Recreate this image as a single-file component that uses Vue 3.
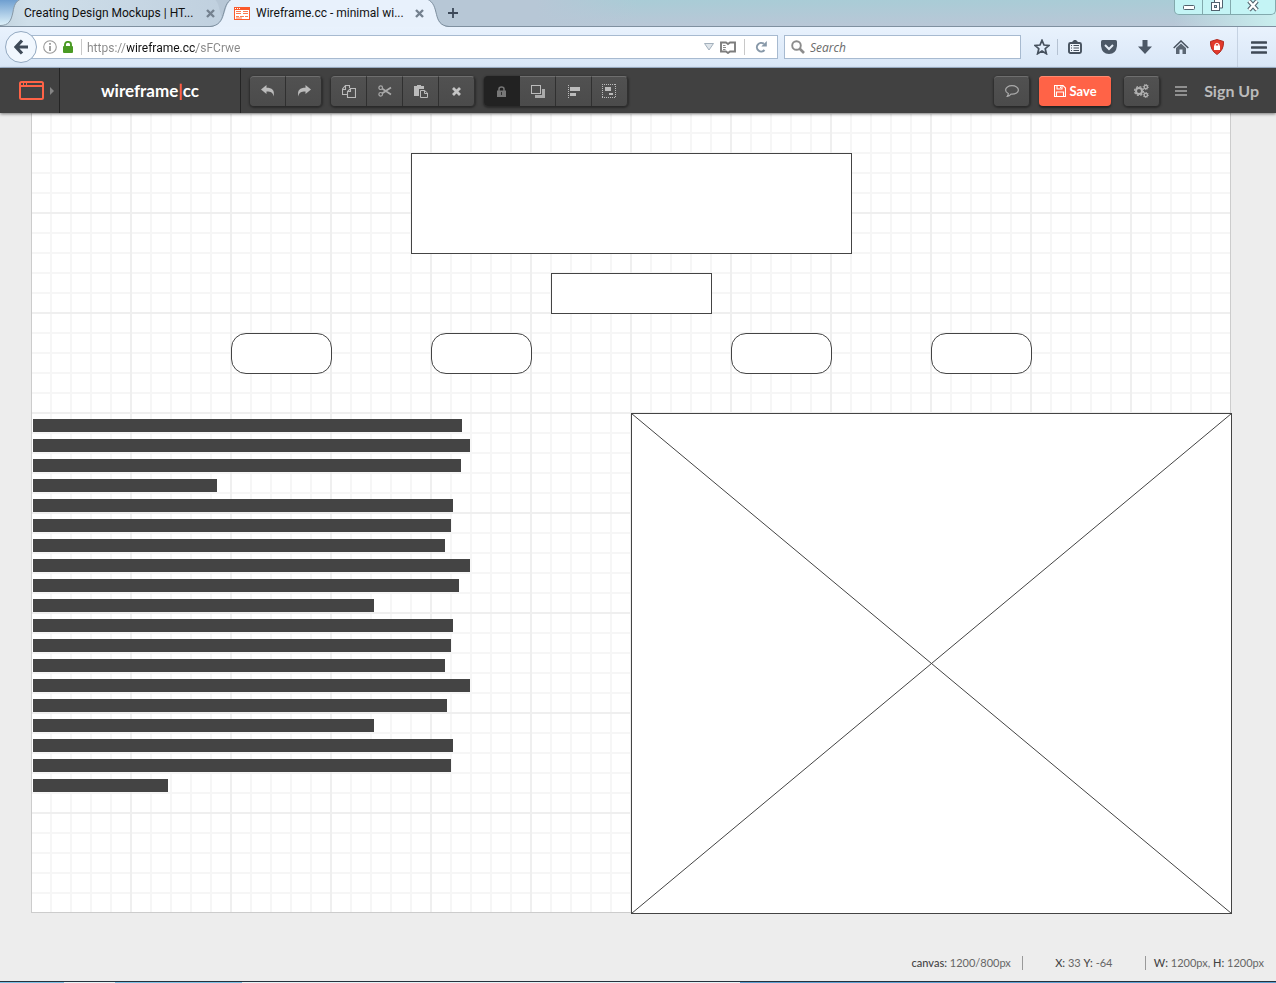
<script setup>
import { ref } from 'vue'

const url = ref('https://wireframe.cc/sFCrwe')
const query = ref('')

const lineWidths = [429, 437, 428, 184, 420, 418, 412, 437, 426, 341, 420, 418, 412, 437, 414, 341, 420, 418, 135]

const boxes = ['hero', 'subtitle', 'pill one', 'pill two', 'pill three', 'pill four']
</script>

<template>
  <div class="window">
    <header class="tabstrip">
      <svg class="tabshape" width="480" height="27" viewBox="0 0 480 27" aria-hidden="true">
        <defs>
          <linearGradient id="idle" x1="0" y1="0" x2="1" y2="0">
            <stop offset="0" stop-color="#c3d4df" />
            <stop offset="0.12" stop-color="#cfdfea" />
            <stop offset="1" stop-color="#bfcfde" />
          </linearGradient>
          <linearGradient id="corner" x1="0" y1="0" x2="0" y2="1">
            <stop offset="0" stop-color="#6f9fd0" />
            <stop offset="1" stop-color="#e2f4fb" />
          </linearGradient>
        </defs>
        <path d="M0 0H18L8 26H0Z" fill="url(#corner)" />
        <path d="M0 26C9 26 11 21 13 12C14 5 16 1 21 -1H214C222 3 218 26 232 26Z" fill="url(#idle)" />
        <path d="M0 25.500C9 25.500 11 21 13 12C14 5 16 1 21 -1" fill="none" stroke="#8798a6" />
        <path d="M0 26.500H480" stroke="#7f90a0" />
        <path d="M210 27C228 26 222 5 232 -1H427C441 5 431 26 449 27Z" fill="#e8f1fc" />
        <path d="M210 26.500C228 25 220 5 232 -1M427 -1C441 5 431 25 449 26.500" fill="none" stroke="#7f90a0" />
      </svg>
      <div class="tab first">
        <span>Creating Design Mockups | HT...</span>
        <button class="close" aria-label="Close tab">
          <svg width="9" height="9" viewBox="0 0 9 9"><path d="M1 1L8 8M8 1L1 8" stroke="#74818f" stroke-width="2.400" /></svg>
        </button>
      </div>
      <div class="tab active">
        <svg width="16" height="13" viewBox="0 0 16 13" aria-hidden="true">
          <path d="M0 0H16V13H0Z" fill="#fb5a2c" />
          <path d="M1 3H15V12H1Z" fill="#fff" />
          <path d="M2 4.500H7M2 6.500H7M2 9.500H5M6 9.500H10M11 9.500H14M9 4.500H14M9 6.500H14M2 11H8" stroke="#fb7a50" />
          <path d="M1 1.500H2M3 1.500H4M5 1.500H6" stroke="#fff" />
        </svg>
        <span>Wireframe.cc - minimal wi...</span>
        <button class="close" aria-label="Close tab">
          <svg width="9" height="9" viewBox="0 0 9 9"><path d="M1 1L8 8M8 1L1 8" stroke="#74818f" stroke-width="2.400" /></svg>
        </button>
      </div>
      <button class="newtab" aria-label="New tab">
        <svg width="10" height="10" viewBox="0 0 10 10"><path d="M5 0V10M0 5H10" stroke="#3c4858" stroke-width="1.800" /></svg>
      </button>
      <div class="winctl">
        <button aria-label="Minimize">
          <svg width="12" height="14" viewBox="0 0 12 14"><rect x=".5" y="5.500" width="11" height="4" rx="1" fill="#fff" stroke="#51626e" /></svg>
        </button>
        <button aria-label="Restore">
          <svg width="12" height="14" viewBox="0 0 12 14"><path d="M3.500 3V-1H11.500V8H9" fill="#fff" stroke="#51626e" /><rect x=".5" y="2.500" width="8" height="8" fill="#fff" stroke="#51626e" /><rect x="3.500" y="5.500" width="2" height="2" fill="#bfe8ef" stroke="#51626e" /></svg>
        </button>
        <button aria-label="Close">
          <svg width="12" height="14" viewBox="0 0 12 14"><path d="M2 1L10 10M10 1L2 10" stroke="#51626e" stroke-width="4.500" /><path d="M2 1L10 10M10 1L2 10" stroke="#fff" stroke-width="2.400" /></svg>
        </button>
      </div>
    </header>

    <nav class="navbar">
      <button class="back" aria-label="Back">
        <svg width="14" height="16" viewBox="0 0 14 16"><path d="M8 1.500L2 8L8 14.500M2.500 8H14" fill="none" stroke="#3f4a58" stroke-width="3.200" /></svg>
      </button>
      <div class="address">
        <svg width="14" height="14" viewBox="0 0 14 14" aria-hidden="true"><circle cx="7" cy="7" r="6.300" fill="none" stroke="#9a9a9a" stroke-width="1.100" /><path d="M7 3V4.800M7 6V11" stroke="#8a8a8a" stroke-width="1.600" /></svg>
        <svg class="lock" width="10" height="12" viewBox="0 0 10 12" aria-hidden="true"><path d="M2 6V3.500C2 0 8 0 8 3.500V6" fill="none" stroke="#4a9a24" stroke-width="1.900" /><rect y="5" width="10" height="7" rx="1" fill="#4a9a24" /></svg>
        <i class="rule"></i>
        <input v-model="url" class="url" type="text" aria-label="Address" />
        <svg width="10" height="8" viewBox="0 0 10 8" aria-hidden="true"><path d="M.5 .5H9.500L5 7Z" fill="#dfe5ea" stroke="#a3b0bc" /></svg>
        <button class="plain" aria-label="Reader view">
          <svg width="16" height="13" viewBox="0 0 16 13"><path d="M1 1.500H6L8 3L10 1.500H15V10.500H10L8 12L6 10.500H1Z" fill="#fff" stroke="#7d7d7d" stroke-width="1.900" /><path d="M3 4.500H5.500M3 6.500H6M3 8.500H5.500" stroke="#8a8a8a" /></svg>
        </button>
        <i class="rule short"></i>
        <button class="plain" aria-label="Reload">
          <svg width="12" height="12" viewBox="0 0 12 12"><path d="M9.500 9A4.300 4.300 0 1 1 8.800 2.800" fill="none" stroke="#8798a8" stroke-width="2" /><path d="M11.800 0V5.500H6.300Z" fill="#8798a8" /></svg>
        </button>
      </div>
      <label class="search">
        <svg width="14" height="14" viewBox="0 0 14 14" aria-hidden="true"><circle cx="5.500" cy="5.500" r="4.300" fill="none" stroke="#8c8c8c" stroke-width="1.900" /><path d="M8.500 8.500L13 13" stroke="#8c8c8c" stroke-width="2.600" /></svg>
        <input v-model="query" type="text" placeholder="Search" aria-label="Search" />
      </label>
      <div class="navicons">
        <button class="star" aria-label="Bookmark">
          <svg width="16" height="16" viewBox="0 0 16 16"><path d="M8 1.300L10 6L15 6.400L11.200 9.700L12.400 14.700L8 12L3.600 14.700L4.800 9.700L1 6.400L6 6Z" fill="none" stroke="#46515e" stroke-width="1.700" /></svg>
        </button>
        <i class="divider"></i>
        <button class="list" aria-label="Bookmarks list">
          <svg width="14" height="14" viewBox="0 0 14 14"><rect x="1" y="3" width="12" height="10" rx="1.500" fill="#eef4fb" stroke="#46515e" stroke-width="1.900" /><path d="M3 3L7 -1L11 3Z" fill="#46515e" /><path d="M3 5.500H4M5.500 5.500H11M3 8H4M5.500 8H11M3 10.500H4M5.500 10.500H11" stroke="#46515e" stroke-width="1.200" /></svg>
        </button>
        <button aria-label="Pocket">
          <svg width="16" height="14" viewBox="0 0 16 14"><path d="M1.500 0H14.500Q16 0 16 1.500V6Q15 14 8 14Q1 14 0 6V1.500Q0 0 1.500 0Z" fill="#4c5866" /><path d="M4 5L8 9L12 5" fill="none" stroke="#e5edf6" stroke-width="2" /></svg>
        </button>
        <button aria-label="Downloads">
          <svg width="14" height="14" viewBox="0 0 14 14"><path d="M4.500 0H9.500V6.500H14L7 14L0 6.500H4.500Z" fill="#4c5866" /></svg>
        </button>
        <button aria-label="Home">
          <svg width="16" height="14" viewBox="0 0 16 14"><path d="M.7 8L8 1L15.300 8" fill="none" stroke="#46515e" stroke-width="1.500" /><path d="M3 8L8 3.500L13 8V14H9.500V9.500H6.500V14H3Z" fill="#5b6673" /></svg>
        </button>
        <button aria-label="Shield">
          <svg width="14" height="16" viewBox="0 0 14 16"><path d="M7 .5L13.500 2.500Q14 11 7 15.500Q0 11 .5 2.500Z" fill="#e23a2c" stroke="#b02a20" /><rect x="4" y="6.500" width="6" height="4.500" fill="#fff" /><path d="M5.200 7V5.500Q7 3 8.800 5.500V7" fill="none" stroke="#fff" stroke-width="1.200" /></svg>
        </button>
        <button class="menu" aria-label="Menu">
          <svg width="16" height="13" viewBox="0 0 16 13"><path d="M1 1.500H15M1 6.500H15M1 11.500H15" stroke="#3f4955" stroke-width="2.600" stroke-linecap="round" /></svg>
        </button>
      </div>
    </nav>

    <div class="toolbar">
      <button class="device" aria-label="Choose canvas">
        <svg width="25" height="19" viewBox="0 0 25 19"><rect x="1" y="1" width="23" height="17" rx="1.500" fill="none" stroke="#ff6347" stroke-width="2" /><path d="M1 5H24" stroke="#ff6347" stroke-width="2" /><path d="M4.500 1V5M7.500 1V5" stroke="#ff6347" /></svg>
        <svg width="4" height="8" viewBox="0 0 4 8"><path d="M0 0L4 4L0 8Z" fill="#858585" /></svg>
      </button>
      <h1 class="brand">wireframe<b>|</b>cc</h1>
      <div class="group">
        <button aria-label="Undo"><svg width="14" height="12" viewBox="0 0 14 12"><path d="M0 4.500L5.500 0V2.800C11 2.800 14 5 12.600 11.500C12 7.500 10 6.500 5.500 6.500V9Z" fill="#bbb" /></svg></button>
        <button aria-label="Redo"><svg width="14" height="12" viewBox="0 0 14 12"><path d="M14 4.500L8.500 0V2.800C3 2.800 0 5 1.400 11.500C2 7.500 4 6.500 8.500 6.500V9Z" fill="#bbb" /></svg></button>
      </div>
      <div class="group">
        <button aria-label="Copy"><svg width="14" height="13" viewBox="0 0 14 13"><path d="M5.500 9.500H.5V4L3.500 .5H7.500V3M.5 4.500H3.500V.5M5.500 12.500V6.500L8.500 3.500H13.500V12.500ZM5.500 6.500H8.500V3.500" fill="none" stroke="#bbb" stroke-width="1.100" /></svg></button>
        <button aria-label="Cut"><svg width="14" height="12" viewBox="0 0 14 12"><circle cx="2.700" cy="2.700" r="1.800" fill="none" stroke="#aaa" stroke-width="1.200" /><circle cx="2.700" cy="9.300" r="1.800" fill="none" stroke="#aaa" stroke-width="1.200" /><path d="M4 3.500L13 9.500M4 8.500L13 2.500" stroke="#aaa" stroke-width="1.700" /></svg></button>
        <button aria-label="Paste"><svg width="14" height="13" viewBox="0 0 14 13"><path d="M0 1H3V0H7V1H10V4H5V11H0Z" fill="#bbb" /><path d="M6.500 5.500H10.500L13.500 8V12.500H6.500ZM10.500 5.500V8.500H13.500" fill="#4d4d4d" stroke="#bbb" /></svg></button>
        <button aria-label="Delete"><svg width="9" height="9" viewBox="0 0 9 9"><path d="M1 1L8 8M8 1L1 8" stroke="#c4c4c4" stroke-width="2.800" /></svg></button>
      </div>
      <div class="group">
        <button class="pressed" aria-label="Lock"><svg width="9" height="11" viewBox="0 0 9 11"><path d="M2 5V3C2 .2 7 .2 7 3V5" fill="none" stroke="#777" stroke-width="1.500" /><rect y="4.500" width="9" height="6.500" fill="#777" /><path d="M4.500 6V9" stroke="#333" /></svg></button>
        <button aria-label="Arrange"><svg width="14" height="13" viewBox="0 0 14 13"><rect x=".5" y=".5" width="9" height="8" fill="none" stroke="#bbb" /><path d="M11 4H14V13H4V10H11Z" fill="#aaa" /></svg></button>
        <button aria-label="Align"><svg width="12" height="13" viewBox="0 0 12 13" shape-rendering="crispEdges"><path d="M.5 0V13" stroke="#bbb" stroke-dasharray="1 1" /><path d="M2 2H12V6H2ZM2 8H8V11H2Z" fill="#bbb" /></svg></button>
        <button aria-label="Group"><svg width="15" height="14" viewBox="0 0 15 14" shape-rendering="crispEdges"><path d="M0 .5H14M0 13.500H14M.5 0V14M13.500 0V14" stroke="#bbb" stroke-dasharray="1 1" /><path d="M3 3H9V7H3ZM7 9H11V11H7Z" fill="#bbb" /></svg></button>
      </div>
      <div class="right">
        <div class="group"><button aria-label="Comment"><svg width="14" height="12" viewBox="0 0 14 12"><path d="M3.300 8.500C1.500 7.700 .6 6.500 .6 5C.6 2.600 3.400 .7 7 .7S13.400 2.600 13.400 5S10.600 9.200 7 9.200H6C5 10.400 4 11.200 2.300 11.400C3 10.500 3.400 9.700 3.300 8.500Z" fill="none" stroke="#aaa" stroke-width="1.200" /></svg></button></div>
        <button class="save"><svg width="12" height="12" viewBox="0 0 12 12" aria-hidden="true"><path d="M.5 .5H9L11.500 3V11.500H.5ZM3 .5V4H8V.5M2.500 11.500V7H9.500V11.500M6.500 1.500V3" fill="none" stroke="#fff" stroke-width="1.100" /></svg>Save</button>
        <div class="group"><button aria-label="Settings"><svg width="15" height="14" viewBox="0 0 15 14"><circle cx="5" cy="7" r="3" fill="none" stroke="#b0b0b0" stroke-width="2" /><circle cx="5" cy="7" r="4.500" fill="none" stroke="#b0b0b0" stroke-width="1.200" stroke-dasharray="2 1.530" /><circle cx="11.800" cy="3" r="1.700" fill="none" stroke="#b0b0b0" stroke-width="1.400" /><circle cx="11.800" cy="3" r="2.600" fill="none" stroke="#b0b0b0" stroke-dasharray="1 1" /><circle cx="11.800" cy="11" r="1.700" fill="none" stroke="#b0b0b0" stroke-width="1.400" /><circle cx="11.800" cy="11" r="2.600" fill="none" stroke="#b0b0b0" stroke-dasharray="1 1" /></svg></button></div>
        <button class="burger" aria-label="Menu"><svg width="12" height="10" viewBox="0 0 12 10"><path d="M0 1H12M0 5H12M0 9H12" stroke="#aaa" stroke-width="1.500" /></svg></button>
        <a class="signup" href="#">Sign Up</a>
      </div>
    </div>

    <main class="stage">
      <div class="canvas">
        <div v-for="name in boxes" :key="name" class="box" :class="name"></div>
        <div class="paragraph">
          <i v-for="(w, n) in lineWidths" :key="n" :style="{ width: w + 'px' }"></i>
        </div>
        <svg class="picture" width="601" height="501" viewBox="0 0 601 501" aria-hidden="true">
          <rect x=".5" y=".5" width="600" height="500" fill="#fff" stroke="#444" />
          <path d="M.5 .5L600.500 500.500M600.500 .5L.5 500.500" stroke="#444" />
        </svg>
      </div>
    </main>

    <footer class="status">
      <span class="size"><b>canvas:</b> 1200/800px</span>
      <span class="pos"><b>X:</b> 33 <b>Y:</b> -64</span>
      <span class="dim"><b>W:</b> 1200px, <b>H:</b> 1200px</span>
    </footer>
    <div class="taskbar"></div>
  </div>
</template>

<style>
body {
  margin: 0;
  background: #ededed;
}
</style>

<style scoped>
* {
  box-sizing: border-box;
}
.window {
  display: flex;
  flex-direction: column;
  min-height: 100vh;
  font: 12px/16px Roboto, "Open Sans", sans-serif;
  overflow: hidden;
}
button {
  display: inline-flex;
  align-items: center;
  justify-content: center;
  padding: 0;
  border: 0;
  background: none;
  font: inherit;
  flex: none;
}
svg {
  display: block;
  flex: none;
}
.tabstrip {
  position: relative;
  display: flex;
  height: 27px;
  padding-left: 24px;
  border-bottom: 1px solid #7f90a0;
  background: linear-gradient(90deg, #b7c7d6 0, #b7c7d6 42%, transparent 50%, transparent 92%, #c9eeee 100%), linear-gradient(#a9ccd6, #b9c7d7);
}
.tabshape {
  position: absolute;
  left: 0;
  top: 0;
}
.tab {
  position: relative;
  display: flex;
  align-items: center;
  width: 210px;
  height: 26px;
  color: #111;
  white-space: nowrap;
}
.active {
  gap: 6px;
}
.tab .close {
  width: 9px;
  margin: 0 19px 0 auto;
}
.active .close {
  margin-right: 20px;
}
.newtab {
  position: relative;
  width: 18px;
  height: 26px;
}
.winctl {
  display: flex;
  height: 15px;
  margin-left: auto;
  border: 1px solid #82a9ad;
  border-top: 0;
  border-radius: 0 0 5px 5px;
  background: #c4f4f5;
  overflow: hidden;
}
.winctl button {
  width: 28px;
  border-right: 1px solid #82a9ad;
}
.winctl button:last-child {
  width: 44px;
  border: 0;
}
.navbar {
  display: flex;
  align-items: center;
  height: 41px;
  padding-left: 5px;
  border-bottom: 1px solid #a5b9d2;
  background: linear-gradient(#e9f2fd, #d9e7f7);
}
.back {
  position: relative;
  z-index: 1;
  width: 32px;
  height: 32px;
  border: 1px solid #93a9c1;
  border-radius: 50%;
  background: #f1f7fe;
}
.address,
.search {
  display: flex;
  align-items: center;
  height: 24px;
  border: 1px solid #a7bad0;
  background: #fff;
}
.address {
  flex: 1 1 auto;
  margin: 0 6px 0 -6px;
  padding: 0 10px 0 11px;
}
.lock {
  margin-left: 6px;
}
.rule {
  width: 1px;
  height: 16px;
  margin: 0 5px 0 8px;
  background: #c8c8c8;
}
.rule.short {
  margin: 0 10px 0 8px;
}
.url {
  flex: 1;
  min-width: 0;
  padding: 2px 0 0;
  border: 0;
  outline: 0;
  font: inherit;
  color: transparent;
  background: linear-gradient(90deg, #888 0 40px, #111 40px 109px, #888 109px);
  -webkit-background-clip: text;
  background-clip: text;
}
.address .plain {
  margin-left: 6px;
}
.address .rule + .plain {
  margin-left: 0;
}
.search {
  width: 237px;
  padding: 0 6px;
  gap: 5px;
}
.search input {
  flex: 1;
  min-width: 0;
  padding: 2px 0 0;
  border: 0;
  outline: 0;
  font: 12px/16px "Open Sans", sans-serif;
}
.search input::placeholder {
  color: #6a6a6a;
  font-style: italic;
}
.navicons {
  display: flex;
  align-items: center;
  height: 40px;
  margin-left: 10px;
}
.navicons button {
  width: 36px;
  height: 16px;
}
.navicons .star {
  width: 22px;
}
.divider {
  width: 1px;
  height: 16px;
  margin-left: 4px;
  background: #b5c2d2;
}
.navicons .list {
  width: 33px;
}
.navicons .menu {
  width: 39px;
  height: 40px;
  margin-left: 2px;
  padding-left: 4px;
  border-left: 1px solid #c5d2e2;
}
.toolbar {
  position: relative;
  z-index: 2;
  display: flex;
  align-items: center;
  height: 45px;
  background: #414141;
  box-shadow: 0 1px 3px rgba(0, 0, 0, 0.5);
  font-family: Lato, "Open Sans", sans-serif;
}
.device {
  width: 60px;
  height: 45px;
  gap: 6px;
  padding-left: 13px;
  border-right: 1px solid #242424;
}
.brand {
  width: 181px;
  height: 45px;
  margin: 0 9px 0 0;
  border-right: 1px solid #242424;
  color: #fff;
  font: bold 17px/46px Lato, sans-serif;
  text-align: center;
}
.brand b {
  color: #ff6347;
}
.group {
  display: flex;
  height: 30px;
  margin-right: 9px;
  border-radius: 4px;
  box-shadow: 0 1px 2px 1px #2a2a2a;
}
.group button {
  width: 36px;
  border-right: 1px solid #303030;
  border-top: 1px solid #6e6e6e;
  background: linear-gradient(#515151, #4b4b4b);
}
.group button:first-child {
  border-radius: 4px 0 0 4px;
}
.group button:last-child {
  border-radius: 0 4px 4px 0;
}
.group button:only-child {
  border-radius: 4px;
}
.group .pressed {
  border-color: #222;
  background: #222;
}
.right {
  display: flex;
  align-items: center;
  margin-left: auto;
  padding-right: 17px;
}
.save {
  width: 72px;
  height: 30px;
  gap: 4px;
  margin-right: 13px;
  border-radius: 4px;
  background: #ff6347;
  box-shadow: inset 0 1px #ff8a70, 0 2px 2px #222;
  color: #fff;
  font-size: 13px;
  font-weight: bold;
}
.burger {
  width: 12px;
  margin: 0 17px 0 6px;
}
.signup {
  color: #bbb;
  font: bold 16px/20px Lato, sans-serif;
  text-decoration: none;
}
.stage {
  padding-left: 31px;
}
.canvas {
  position: relative;
  width: 1200px;
  height: 800px;
  border: 1px solid #ccc;
  border-top: 0;
  background-color: #fff;
  background-image:
    linear-gradient(90deg, #efefef 2px, transparent 2px),
    linear-gradient(#efefef 2px, transparent 2px),
    linear-gradient(90deg, #f6f6f6 2px, transparent 2px),
    linear-gradient(#f6f6f6 2px, transparent 2px);
  background-size: 100px 100px, 100px 100px, 20px 20px, 20px 20px;
  background-position: -2px 0, 0 -1px, -2px 0, 0 -1px;
}
.box {
  position: absolute;
  left: 379px;
  top: 40px;
  width: 441px;
  height: 101px;
  border: 1px solid #444;
  background: #fff;
}
.subtitle {
  left: 519px;
  top: 160px;
  width: 161px;
  height: 41px;
}
.pill {
  left: 199px;
  top: 220px;
  width: 101px;
  height: 41px;
  border-radius: 15px;
}
.pill.two {
  left: 399px;
}
.pill.three {
  left: 699px;
}
.pill.four {
  left: 899px;
}
.paragraph {
  position: absolute;
  left: 1px;
  top: 306px;
  display: grid;
  gap: 7px;
}
.paragraph i {
  height: 13px;
  background: #444;
}
.picture {
  position: absolute;
  left: 599px;
  top: 300px;
}
.status {
  display: flex;
  justify-content: flex-end;
  align-items: center;
  margin-top: auto;
  padding: 0 12px 11px 0;
  color: #666;
  font: 11px/14px Lato, sans-serif;
}
.status b {
  color: #444;
  font-weight: 500;
}
.status .size {
  padding-right: 11px;
}
.status .pos {
  width: 124px;
  border: 1px solid #999;
  border-width: 0 1px;
  text-align: center;
}
.status .dim {
  padding-left: 8px;
}
.taskbar {
  height: 2px;
  border-top: 1px solid #26323c;
  background: linear-gradient(90deg, #7cc0e4 0 5%, #e2f3f7 5% 9%, #7cc0e4 9% 19%, #e2f3f7 19% 58%, #5d9fd0 58%);
}
</style>
